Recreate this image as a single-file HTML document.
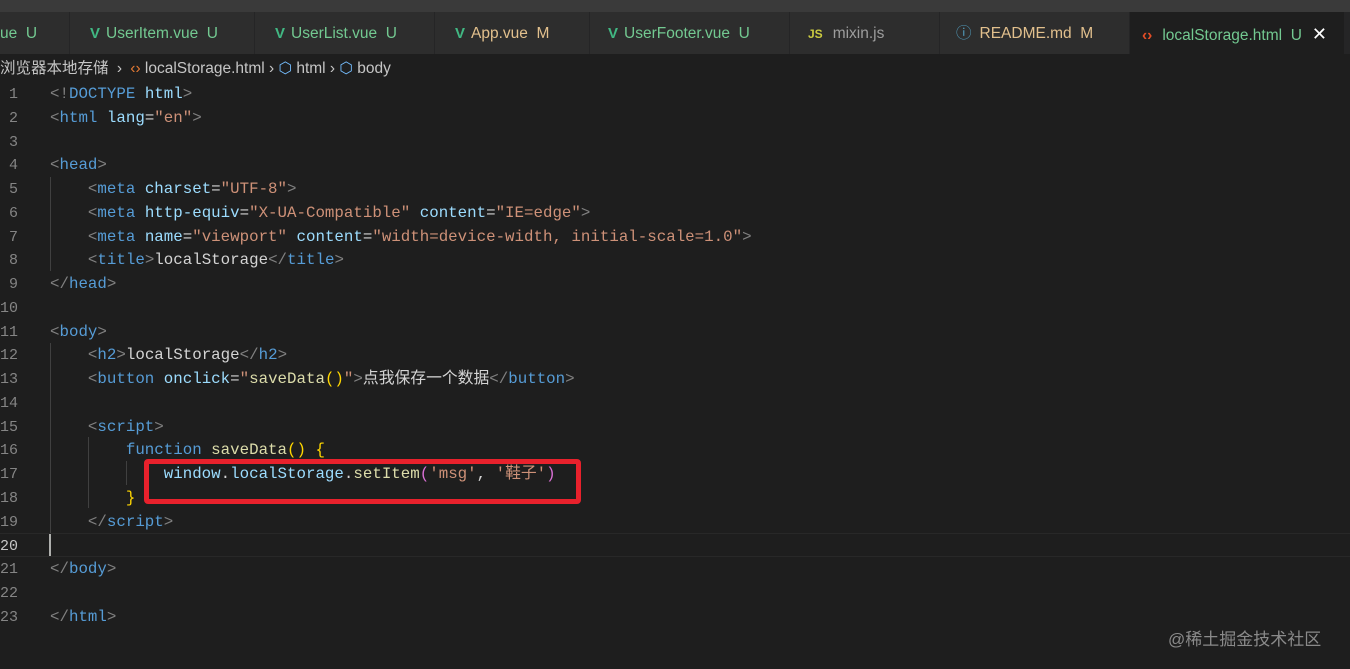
<!DOCTYPE html>
<html><head><meta charset="utf-8"><style>
*{margin:0;padding:0;box-sizing:border-box}
body{width:1350px;height:669px;background:#1e1e1e;overflow:hidden;position:relative;font-family:"Liberation Sans","Noto Sans CJK SC",sans-serif}
.top{position:absolute;left:0;top:0;width:1350px;height:12px;background:#3a3a3a}
.tabs{position:absolute;left:0;top:12px;width:1350px;height:42px;background:#252526}
.tab{position:absolute;top:0;height:42px;background:#2d2d2d;border-right:1px solid #252526;font-size:15.5px;line-height:44px;white-space:nowrap;overflow:hidden}
.tab .v{color:#41b883;font-weight:bold;font-size:15px;margin-right:6px}
.g{color:#73c991}.m{color:#e2c08d}
.crumb{position:absolute;top:55px;left:0;height:28px;line-height:28px;font-size:15.5px;color:#c5c5c5;white-space:nowrap}
.code{position:absolute;left:0;top:83px;font-family:"Liberation Mono","Noto Sans CJK SC",monospace;font-size:15.8px;line-height:23.77px;white-space:pre;color:#d4d4d4}
.ln{position:absolute;left:0;top:83px;width:18px;text-align:right;font-family:"Liberation Mono",monospace;font-size:15px;line-height:23.77px;color:#858585;white-space:pre}
.t{color:#808080}.tg{color:#569cd6}.a{color:#9cdcfe}.s{color:#ce9178}.f{color:#dcdcaa}.y{color:#ffd700}.p{color:#da70d6}.k{color:#569cd6}
.guide{position:absolute;width:1px;background:#404040}
</style></head><body>
<div class="top"></div>
<div class="tabs">
<div class="tab" style="left:0;width:70px;padding-left:0"><span class="g">ue &nbsp;U</span></div>
<div class="tab" style="left:70px;width:185px;padding-left:20px"><span class="v">V</span><span class="g">UserItem.vue &nbsp;U</span></div>
<div class="tab" style="left:255px;width:180px;padding-left:20px"><span class="v">V</span><span class="g">UserList.vue &nbsp;U</span></div>
<div class="tab" style="left:435px;width:155px;padding-left:20px"><span class="v">V</span><span class="m">App.vue &nbsp;M</span></div>
<div class="tab" style="left:590px;width:200px;padding-left:18px"><span class="v">V</span><span class="g">UserFooter.vue &nbsp;U</span></div>
<div class="tab" style="left:790px;width:150px;padding-left:18px"><span style="color:#cbcb41;font-weight:bold;font-size:12px;margin-right:10px">JS</span><span style="color:#9d9d9d">mixin.js</span></div>
<div class="tab" style="left:940px;width:190px;padding-left:16px"><span style="color:#519aba;margin-right:8px">ⓘ</span><span class="m">README.md &nbsp;M</span></div>
<div class="tab" style="left:1130px;width:215px;padding-left:12px;background:#1e1e1e"><span style="color:#e44d26;margin-right:10px;font-weight:bold">‹›</span><span class="g">localStorage.html &nbsp;U</span><span style="color:#fff;margin-left:10px;font-size:18px">✕</span></div>
</div>
<div class="crumb">浏览器本地存储 <span style="margin:0 4px">›</span> <span style="color:#e37933">‹›</span> localStorage.html › <span style="color:#75beff">⬡</span> html › <span style="color:#75beff">⬡</span> body</div>
<div style="position:absolute;left:0;top:533px;width:1350px;height:24px;border-top:1px solid #282828;border-bottom:1px solid #282828"></div>
<div style="position:absolute;left:49px;top:534px;width:2px;height:22px;background:#aeafad"></div>
<div class="guide" style="left:50px;top:177px;height:94px"></div>
<div class="guide" style="left:50px;top:343px;height:190px"></div>
<div class="guide" style="left:88px;top:437px;height:71px"></div>
<div class="guide" style="left:126px;top:461px;height:24px"></div>
<div class="ln">1
2
3
4
5
6
7
8
9
10
11
12
13
14
15
16
17
18
19
<span style="color:#c6c6c6">20</span>
21
22
23</div>
<div class="code" style="left:50px"><span class="t">&lt;!</span><span class="tg">DOCTYPE</span> <span class="a">html</span><span class="t">&gt;</span>
<span class="t">&lt;</span><span class="tg">html</span> <span class="a">lang</span>=<span class="s">"en"</span><span class="t">&gt;</span>

<span class="t">&lt;</span><span class="tg">head</span><span class="t">&gt;</span>
    <span class="t">&lt;</span><span class="tg">meta</span> <span class="a">charset</span>=<span class="s">"UTF-8"</span><span class="t">&gt;</span>
    <span class="t">&lt;</span><span class="tg">meta</span> <span class="a">http-equiv</span>=<span class="s">"X-UA-Compatible"</span> <span class="a">content</span>=<span class="s">"IE=edge"</span><span class="t">&gt;</span>
    <span class="t">&lt;</span><span class="tg">meta</span> <span class="a">name</span>=<span class="s">"viewport"</span> <span class="a">content</span>=<span class="s">"width=device-width, initial-scale=1.0"</span><span class="t">&gt;</span>
    <span class="t">&lt;</span><span class="tg">title</span><span class="t">&gt;</span>localStorage<span class="t">&lt;/</span><span class="tg">title</span><span class="t">&gt;</span>
<span class="t">&lt;/</span><span class="tg">head</span><span class="t">&gt;</span>

<span class="t">&lt;</span><span class="tg">body</span><span class="t">&gt;</span>
    <span class="t">&lt;</span><span class="tg">h2</span><span class="t">&gt;</span>localStorage<span class="t">&lt;/</span><span class="tg">h2</span><span class="t">&gt;</span>
    <span class="t">&lt;</span><span class="tg">button</span> <span class="a">onclick</span>=<span class="s">"</span><span class="f">saveData</span><span class="y">()</span><span class="s">"</span><span class="t">&gt;</span>点我保存一个数据<span class="t">&lt;/</span><span class="tg">button</span><span class="t">&gt;</span>

    <span class="t">&lt;</span><span class="tg">script</span><span class="t">&gt;</span>
        <span class="k">function</span> <span class="f">saveData</span><span class="y">() {</span>
            <span class="a">window</span>.<span class="a">localStorage</span>.<span class="f">setItem</span><span class="p">(</span><span class="s">'msg'</span>, <span class="s">'鞋子'</span><span class="p">)</span>
        <span class="y">}</span>
    <span class="t">&lt;/</span><span class="tg">script</span><span class="t">&gt;</span>

<span class="t">&lt;/</span><span class="tg">body</span><span class="t">&gt;</span>

<span class="t">&lt;/</span><span class="tg">html</span><span class="t">&gt;</span></div>
<div style="position:absolute;left:144px;top:459px;width:437px;height:45px;border:5px solid #e8212c;border-radius:4px"></div>
<div style="position:absolute;left:1168px;top:625px;font-size:17px;color:#8a8a8a">@稀土掘金技术社区</div>
</body></html>
